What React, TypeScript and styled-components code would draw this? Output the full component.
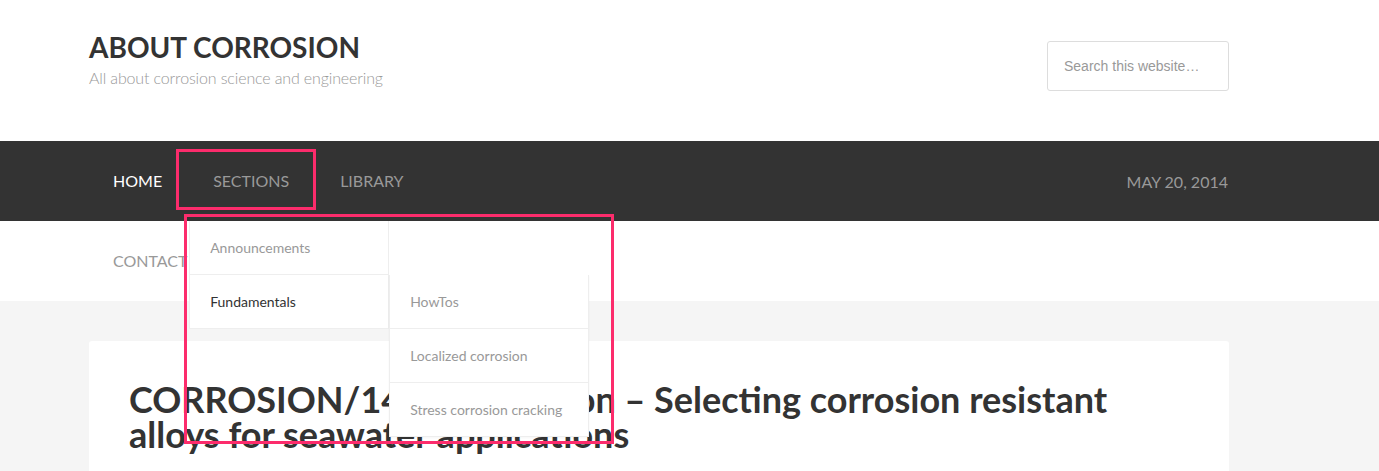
import styled, { createGlobalStyle } from "styled-components";

const GlobalStyle = createGlobalStyle`
  body {
    margin: 0;
    font-family: Lato, "Open Sans", Arial, sans-serif;
    background: #f5f5f5;
    color: #333;
    overflow: hidden;
  }
`;

const Page = styled.div`
  position: relative;
  min-height: 471px;
`;

const Wrap = styled.div`
  width: 1140px;
  margin-left: 89px;
`;

const Header = styled.header`
  background: #fff;
  height: 141px;
`;

const HeaderInner = styled(Wrap)`
  display: flex;
  justify-content: space-between;
  align-items: flex-start;
  padding-top: 30px;
`;

const SiteTitle = styled.h1`
  margin: 0;
  font-size: 28px;
  line-height: 34px;
  font-weight: 700;
  color: #333;
  text-transform: uppercase;
`;

const Tagline = styled.p`
  margin: 2px 0 0;
  font-size: 16px;
  line-height: 24px;
  font-weight: 300;
  letter-spacing: -0.14px;
  color: #999;
`;

const SearchInput = styled.input`
  box-sizing: border-box;
  margin-top: 11px;
  width: 182px;
  height: 50px;
  padding: 0 16px;
  border: 1px solid #ddd;
  border-radius: 3px;
  background: #fff;
  font-family: "Liberation Sans", Arial, sans-serif;
  font-size: 14px;
  color: #999;
  outline: none;
  &::placeholder {
    color: #999;
  }
`;

const NavBar = styled.nav<{ $dark?: boolean }>`
  background: ${(p) => (p.$dark ? "#333" : "#fff")};
  height: 80px;
`;

const NavInner = styled(Wrap)`
  display: flex;
  align-items: center;
  height: 80px;
`;

const NavItem = styled.div<{ $active?: boolean }>`
  position: relative;
  padding: 0 24px;
  margin-right: 3px;
  line-height: 80px;
  font-size: 16px;
  text-transform: uppercase;
  color: ${(p) => (p.$active ? "#fff" : "#999")};
`;

const NavDate = styled.div`
  margin-left: auto;
  padding-right: 1px;
  font-size: 16px;
  color: #999;
  text-transform: uppercase;
`;

const SubMenu = styled.ul`
  position: absolute;
  top: 80px;
  left: 0;
  margin: 0;
  padding: 0;
  list-style: none;
  width: 200px;
  z-index: 10;
  line-height: normal;
  text-transform: none;
`;

const NestedMenu = styled(SubMenu)`
  top: 0;
  left: 199px;
  box-shadow: 0 1px 2px rgba(0, 0, 0, 0.04);
`;

const SubItem = styled.li<{ $hover?: boolean }>`
  position: relative;
  box-sizing: border-box;
  height: 54px;
  display: flex;
  align-items: center;
  padding: 0 20px;
  background: #fff;
  border: 1px solid #eee;
  border-top: none;
  font-size: 14px;
  color: ${(p) => (p.$hover ? "#333" : "#999")};
`;

const Main = styled.main`
  background: #f5f5f5;
  padding-top: 40px;
`;

const Card = styled(Wrap)`
  box-sizing: border-box;
  background: #fff;
  border-radius: 3px;
  padding: 41px 40px 40px;
`;

const EntryTitle = styled.h2`
  margin: 0;
  font-size: 36px;
  line-height: 35px;
  font-weight: 700;
  color: #333;
`;

const Highlight = styled.div<{ $x: number; $y: number; $w: number; $h: number }>`
  position: absolute;
  left: ${(p) => p.$x}px;
  top: ${(p) => p.$y}px;
  width: ${(p) => p.$w}px;
  height: ${(p) => p.$h}px;
  box-sizing: border-box;
  border: 3px solid #fc2c6c;
  pointer-events: none;
  z-index: 20;
`;

export default function App() {
  return (
    <>
      <GlobalStyle />
      <Page>
        <Header>
          <HeaderInner>
            <div>
              <SiteTitle>About Corrosion</SiteTitle>
              <Tagline>All about corrosion science and engineering</Tagline>
            </div>
            <SearchInput type="search" placeholder="Search this website…" />
          </HeaderInner>
        </Header>

        <NavBar $dark>
          <NavInner>
            <NavItem $active>Home</NavItem>
            <NavItem>
              Sections
              <SubMenu>
                <SubItem>Announcements</SubItem>
                <SubItem $hover>
                  Fundamentals
                  <NestedMenu>
                    <SubItem>HowTos</SubItem>
                    <SubItem>Localized corrosion</SubItem>
                    <SubItem>Stress corrosion cracking</SubItem>
                  </NestedMenu>
                </SubItem>
              </SubMenu>
            </NavItem>
            <NavItem>Library</NavItem>
            <NavDate>May 20, 2014</NavDate>
          </NavInner>
        </NavBar>
        <NavBar>
          <NavInner>
            <NavItem>Contact</NavItem>
          </NavInner>
        </NavBar>

        <Main>
          <Card>
            <EntryTitle>
              CORROSION/14 Presentation – Selecting corrosion resistant alloys for seawater applications
            </EntryTitle>
          </Card>
        </Main>

        <Highlight $x={176} $y={149} $w={140} $h={61} />
        <Highlight $x={184} $y={214} $w={430} $h={230} />
      </Page>
    </>
  );
}
